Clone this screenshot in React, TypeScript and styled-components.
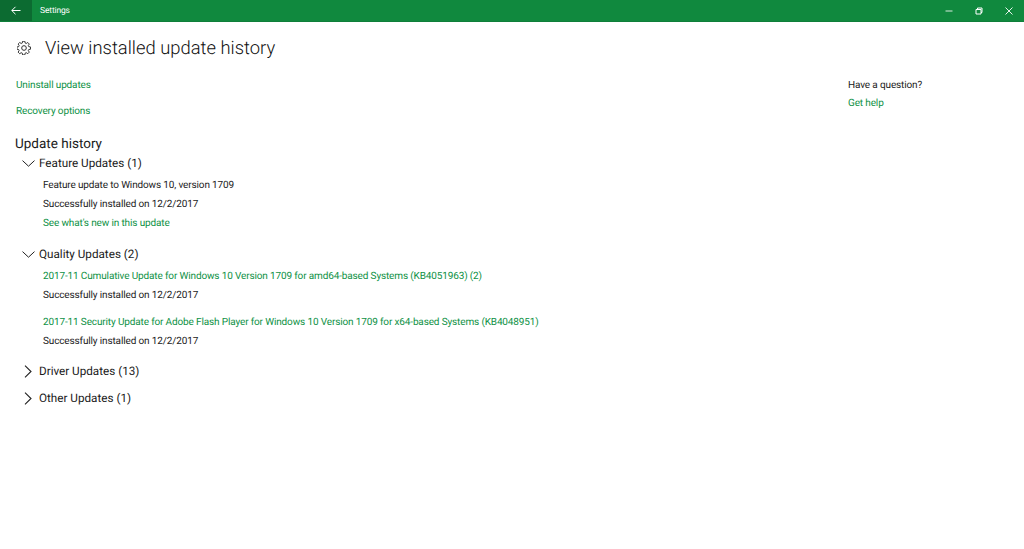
import React from "react";
import styled, { createGlobalStyle } from "styled-components";

const GlobalStyle = createGlobalStyle`
  html, body {
    margin: 0;
    padding: 0;
    background: #fff;
    font-family: "Roboto", "Open Sans", sans-serif;
    color: #1a1a1a;
    text-rendering: geometricPrecision;
  }
`;

const green = "#10893e";
const linkGreen = "#0e9145";

const Page = styled.div`
  width: 1024px;
  height: 549px;
  overflow: hidden;
`;

const TitleBar = styled.div`
  display: flex;
  align-items: center;
  height: 21px;
  background: ${green};
  border-bottom: 1px solid #0f7f3a;
  color: #fff;
`;

const BackButton = styled.div`
  display: flex;
  align-items: center;
  justify-content: center;
  width: 32px;
  height: 21px;
  background: #0c6b31;
`;

const AppName = styled.div`
  margin-left: 8px;
  padding-top: 1px;
  font-size: 8.5px;
  letter-spacing: -0.15px;
  flex: 1;
`;

const WindowButton = styled.div`
  display: flex;
  align-items: center;
  justify-content: center;
  width: 30px;
  height: 21px;
`;

const Header = styled.div`
  display: flex;
  align-items: center;
  height: 52px;
  padding-left: 17px;
`;

const PageTitle = styled.h1`
  margin: 0 0 0 14px;
  font-size: 18.4px;
  font-weight: 300;
  color: #111;
`;

const Columns = styled.div`
  display: flex;
  justify-content: space-between;
`;

const Main = styled.div`
  padding-left: 16px;
  padding-top: 5px;
`;

const Side = styled.div`
  width: 176px;
  padding-top: 5px;
`;

const Link = styled.div<{ $gap?: number }>`
  color: ${linkGreen};
  font-size: 10px;
  letter-spacing: -0.14px;
  line-height: 14px;
  margin-bottom: ${(p) => p.$gap ?? 0}px;
`;

const Plain = styled.div<{ $gap?: number }>`
  color: #222;
  font-size: 10px;
  letter-spacing: -0.14px;
  line-height: 14px;
  margin-bottom: ${(p) => p.$gap ?? 0}px;
`;

const SectionTitle = styled.div`
  font-size: 13.5px;
  line-height: 17px;
  margin-left: -1px;
  margin-top: 17px;
  color: #1a1a1a;
`;

const GroupHead = styled.div<{ $gap?: number }>`
  display: flex;
  align-items: center;
  height: 18px;
  padding-left: 5px;
  margin-top: 1px;
  margin-bottom: ${(p) => p.$gap ?? 0}px;
  font-size: 11.7px;
  color: #1a1a1a;
`;

const Chevron = styled.span`
  display: flex;
  align-items: center;
  justify-content: center;
  width: 14px;
  margin-right: 4px;
`;

const Entries = styled.div<{ $gap?: number }>`
  padding-left: 27px;
  margin-bottom: ${(p) => p.$gap ?? 0}px;
`;

function Down() {
  return (
    <Chevron>
      <svg width="13" height="7" viewBox="0 0 13 7" fill="none" stroke="#222" strokeWidth="1">
        <path d="M0.5 0.6 L6.5 6.2 L12.5 0.6" />
      </svg>
    </Chevron>
  );
}

function Right() {
  return (
    <Chevron>
      <svg width="8" height="13" viewBox="0 0 8 13" fill="none" stroke="#222" strokeWidth="1.1">
        <path d="M1 0.6 L7 6.5 L1 12.4" />
      </svg>
    </Chevron>
  );
}

export default function App() {
  return (
    <Page>
      <GlobalStyle />
      <TitleBar>
        <BackButton>
          <svg width="10" height="9" viewBox="0 0 10 9" fill="none" stroke="#fff" strokeWidth="1">
            <path d="M0.8 4.5 H9.5 M4.5 0.8 L0.8 4.5 L4.5 8.2" />
          </svg>
        </BackButton>
        <AppName>Settings</AppName>
        <WindowButton>
          <svg width="8" height="8" viewBox="0 0 8 8" fill="none" stroke="#d7eadd" strokeWidth="1">
            <path d="M0.5 4 H7.5" />
          </svg>
        </WindowButton>
        <WindowButton>
          <svg width="8" height="8" viewBox="0 0 8 8" fill="none" stroke="#fff" strokeWidth="1">
            <path d="M1 2.5 H6 V7 H1 Z M2.5 2.5 V1 H7 V5.5 H6" />
          </svg>
        </WindowButton>
        <WindowButton>
          <svg width="8" height="8" viewBox="0 0 8 8" fill="none" stroke="#fff" strokeWidth="0.9">
            <path d="M0.5 0.5 L7.5 7.5 M7.5 0.5 L0.5 7.5" />
          </svg>
        </WindowButton>
      </TitleBar>
      <Header>
        <svg width="14" height="14" viewBox="0 0 24 24" fill="none" stroke="#222" strokeWidth="1.6" strokeLinejoin="round">
          <path d="M10 1.5h4l.6 3.2 1.9.8 2.7-1.8 2.8 2.8-1.8 2.7.8 1.9 3.2.6v4l-3.2.6-.8 1.9 1.8 2.7-2.8 2.8-2.7-1.8-1.9.8-.6 3.2h-4l-.6-3.2-1.9-.8-2.7 1.8-2.8-2.8 1.8-2.7-.8-1.9-3.2-.6v-4l3.2-.6.8-1.9-1.8-2.7 2.8-2.8 2.7 1.8 1.9-.8z" transform="translate(0 -1) scale(0.96)" />
          <circle cx="12" cy="12" r="4" />
        </svg>
        <PageTitle>View installed update history</PageTitle>
      </Header>
      <Columns>
        <Main>
          <Link $gap={12}>Uninstall updates</Link>
          <Link>Recovery options</Link>
          <SectionTitle>Update history</SectionTitle>
          <GroupHead $gap={7}>
            <Down />
            Feature Updates (1)
          </GroupHead>
          <Entries $gap={14}>
            <Plain $gap={5}>Feature update to Windows 10, version 1709</Plain>
            <Plain $gap={5}>Successfully installed on 12/2/2017</Plain>
            <Link>See what's new in this update</Link>
          </Entries>
          <GroupHead $gap={7}>
            <Down />
            Quality Updates (2)
          </GroupHead>
          <Entries $gap={13}>
            <Link $gap={5}>2017-11 Cumulative Update for Windows 10 Version 1709 for amd64-based Systems (KB4051963) (2)</Link>
            <Plain $gap={13}>Successfully installed on 12/2/2017</Plain>
            <Link $gap={5}>2017-11 Security Update for Adobe Flash Player for Windows 10 Version 1709 for x64-based Systems (KB4048951)</Link>
            <Plain>Successfully installed on 12/2/2017</Plain>
          </Entries>
          <GroupHead $gap={9}>
            <Right />
            Driver Updates (13)
          </GroupHead>
          <GroupHead>
            <Right />
            Other Updates (1)
          </GroupHead>
        </Main>
        <Side>
          <Plain $gap={4}>Have a question?</Plain>
          <Link>Get help</Link>
        </Side>
      </Columns>
    </Page>
  );
}
